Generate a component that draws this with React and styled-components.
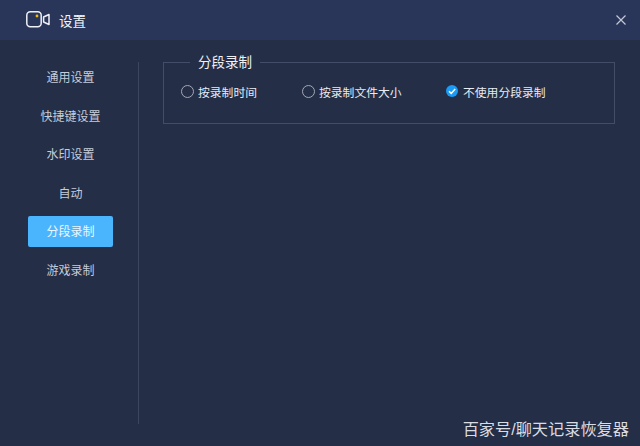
import styled, { createGlobalStyle } from 'styled-components';

const Global = createGlobalStyle`
html, body {
  margin: 0;
  padding: 0;
  background: #242e47;
}
body {
  font-family: 'Liberation Sans', 'Noto Sans CJK SC', sans-serif;
}
`
const Page = styled.div`
width: 640px;
height: 446px;
position: relative;
overflow: hidden;
background: #242e47;
display: flex;
flex-direction: column;
`
const Header = styled.div`
height: 40px;
background: #2a3659;
display: flex;
align-items: center;
padding: 0 13px 0 26px;
`
const HeaderTitle = styled.span`
color: #f2f5fa;
font-size: 13.5px;
margin-left: 9px;
flex: 1;
`
const CloseButton = styled.div`
width: 12px;
height: 12px;
display: flex;
color: #c3c9d8;
`
const Body = styled.div`
flex: 1;
display: flex;
padding-top: 22px;
`
const Sidebar = styled.div`
width: 138px;
height: 362px;
border-right: 1px solid #3c4660;
box-sizing: content-box;
display: flex;
flex-direction: column;
align-items: flex-end;
`
const MenuList = styled.div`
width: 85px;
margin-right: 25px;
display: flex;
flex-direction: column;
gap: 8px;
`
const MenuItem = styled.div`
height: 30.6px;
line-height: 32.5px;
text-align: center;
font-size: 12px;
border-radius: 2px;
color: ${p => (p.$active ? '#eaf6ff' : '#c6ccd9')};
background: ${p => (p.$active ? '#4ab5fc' : 'transparent')};
`
const Content = styled.div`
padding-left: 24px;
margin-top: -8px;
`
const Group = styled.fieldset`
width: 452px;
height: 70px;
margin: 0;
padding: 0;
box-sizing: border-box;
border: 1px solid #434d68;
position: relative;
`
const GroupTitle = styled.legend`
margin-left: 26px;
padding: 0 8px;
color: #eef1f6;
font-size: 13.5px;
line-height: 18px;
height: 16px;
`
const Options = styled.div`
display: flex;
align-items: center;
height: 16px;
margin-top: 13px;
padding-left: 17px;
`
const Option = styled.div`
display: flex;
align-items: center;
width: ${p => p.$width}px;
`
const RadioMark = styled.span`
width: 13px;
height: 13px;
border-radius: 50%;
border: 1px solid #a4a9b6;
box-sizing: border-box;
margin-right: 4px;
flex: none;
`
const CheckedMark = styled.svg`
width: 12px;
height: 12px;
margin-right: 5px;
flex: none;
`
const OptionLabel = styled.span`
color: #e8ebf2;
font-size: 11.8px;
white-space: nowrap;
`
const Watermark = styled.div`
position: absolute;
right: 11px;
bottom: 8px;
color: #d9dce2;
font-size: 16.2px;
line-height: 18px;
white-space: nowrap;
`

const CameraIcon = () => (
    <svg width="24" height="18" viewBox="0 0 24 18" fill="none">
        <rect x="0.8" y="0.8" width="14.4" height="15" rx="3.5" stroke="#eef0f4" strokeWidth="1.5" />
        <path d="M17.6 6 L23 3.5 V13.5 L17.6 11 Z" stroke="#eef0f4" strokeWidth="1.5" strokeLinejoin="round" />
        <circle cx="11" cy="5" r="1.4" fill="#f5b90f" />
    </svg>
)

const menu = ['通用设置', '快捷键设置', '水印设置', '自动', '分段录制', '游戏录制']

const options = [
    { label: '按录制时间', width: 121 },
    { label: '按录制文件大小', width: 144 },
    { label: '不使用分段录制', width: 110, checked: true },
]

const App = () => {
    return (
        <Page>
            <Global />
            <Header>
                <CameraIcon />
                <HeaderTitle>设置</HeaderTitle>
                <CloseButton>
                    <svg width="12" height="12" viewBox="0 0 12 12">
                        <path d="M1.5 1.5 L10.5 10.5 M10.5 1.5 L1.5 10.5" stroke="currentColor" strokeWidth="1.2" />
                    </svg>
                </CloseButton>
            </Header>
            <Body>
                <Sidebar>
                    <MenuList>
                        {menu.map(item => (
                            <MenuItem key={item} $active={item === '分段录制'}>{item}</MenuItem>
                        ))}
                    </MenuList>
                </Sidebar>
                <Content>
                    <Group>
                        <GroupTitle>分段录制</GroupTitle>
                        <Options>
                            {options.map(o => (
                                <Option key={o.label} $width={o.width}>
                                    {o.checked ? (
                                        <CheckedMark viewBox="0 0 12 12">
                                            <circle cx="6" cy="6" r="6" fill="#1a9bf5" />
                                            <path d="M3 6.2 L5.2 8.4 L9.2 3.9" fill="none" stroke="#fff" strokeWidth="1.5" />
                                        </CheckedMark>
                                    ) : (
                                        <RadioMark />
                                    )}
                                    <OptionLabel>{o.label}</OptionLabel>
                                </Option>
                            ))}
                        </Options>
                    </Group>
                </Content>
            </Body>
            <Watermark>百家号/聊天记录恢复器</Watermark>
        </Page>
    )
}

export default App
